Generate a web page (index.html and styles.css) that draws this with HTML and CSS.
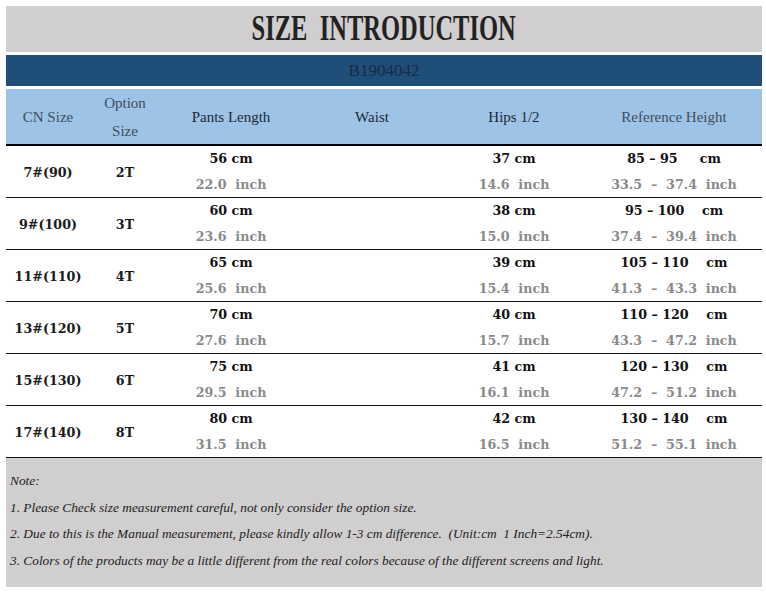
FILE: index.html
```html
<!DOCTYPE html>
<html>
<head>
<meta charset="utf-8">
<link rel="stylesheet" href="styles.css">
</head>
<body>
<div class="page">
  <div class="title"><span class="title-text">SIZE&nbsp;&nbsp;INTRODUCTION</span></div>
  <div class="band">B1904042</div>
  <div class="head">
    <div class="h light">CN Size</div>
    <div class="h light two"><span>Option</span><span>Size</span></div>
    <div class="h">Pants Length</div>
    <div class="h">Waist</div>
    <div class="h">Hips 1/2</div>
    <div class="h light">Reference Height</div>
  </div>

  <div class="row">
    <div class="c">7#(90)</div><div class="c">2T</div>
    <div class="c"><span class="cm">56 cm</span><span class="in">22.0  inch</span></div>
    <div class="c"></div>
    <div class="c"><span class="cm">37 cm</span><span class="in">14.6  inch</span></div>
    <div class="c"><span class="cm">85 – 95     cm</span><span class="in">33.5  –  37.4  inch</span></div>
  </div>
  <div class="row">
    <div class="c">9#(100)</div><div class="c">3T</div>
    <div class="c"><span class="cm">60 cm</span><span class="in">23.6  inch</span></div>
    <div class="c"></div>
    <div class="c"><span class="cm">38 cm</span><span class="in">15.0  inch</span></div>
    <div class="c"><span class="cm">95 – 100    cm</span><span class="in">37.4  –  39.4  inch</span></div>
  </div>
  <div class="row">
    <div class="c">11#(110)</div><div class="c">4T</div>
    <div class="c"><span class="cm">65 cm</span><span class="in">25.6  inch</span></div>
    <div class="c"></div>
    <div class="c"><span class="cm">39 cm</span><span class="in">15.4  inch</span></div>
    <div class="c"><span class="cm">105 – 110    cm</span><span class="in">41.3  –  43.3  inch</span></div>
  </div>
  <div class="row">
    <div class="c">13#(120)</div><div class="c">5T</div>
    <div class="c"><span class="cm">70 cm</span><span class="in">27.6  inch</span></div>
    <div class="c"></div>
    <div class="c"><span class="cm">40 cm</span><span class="in">15.7  inch</span></div>
    <div class="c"><span class="cm">110 – 120    cm</span><span class="in">43.3  –  47.2  inch</span></div>
  </div>
  <div class="row">
    <div class="c">15#(130)</div><div class="c">6T</div>
    <div class="c"><span class="cm">75 cm</span><span class="in">29.5  inch</span></div>
    <div class="c"></div>
    <div class="c"><span class="cm">41 cm</span><span class="in">16.1  inch</span></div>
    <div class="c"><span class="cm">120 – 130    cm</span><span class="in">47.2  –  51.2  inch</span></div>
  </div>
  <div class="row">
    <div class="c">17#(140)</div><div class="c">8T</div>
    <div class="c"><span class="cm">80 cm</span><span class="in">31.5  inch</span></div>
    <div class="c"></div>
    <div class="c"><span class="cm">42 cm</span><span class="in">16.5  inch</span></div>
    <div class="c"><span class="cm">130 – 140    cm</span><span class="in">51.2  –  55.1  inch</span></div>
  </div>

  <div class="note">
    <p>Note:</p>
    <p>1. Please Check size measurement careful, not only consider the option size.</p>
    <p>2. Due to this is the Manual measurement, please kindly allow 1-3 cm difference.&nbsp; (Unit:cm&nbsp; 1 Inch=2.54cm).</p>
    <p>3. Colors of the products may be a little different from the real colors because of the different screens and light.</p>
  </div>
</div>
</body>
</html>
```
FILE: styles.css
```css
html, body {
  margin: 0;
  padding: 0;
  background: #ffffff;
}
.page {
  padding: 6px 4px 0 6px;
  width: 756px;
  font-family: "Liberation Serif", "DejaVu Serif", serif;
}
.title {
  height: 46px;
  background: #d0cecf;
  display: flex;
  align-items: center;
  justify-content: center;
  margin-bottom: 3px;
}
.title-text {
  display: inline-block;
  font-family: "Liberation Serif", serif;
  font-weight: bold;
  font-size: 35px;
  line-height: 46px;
  color: #222222;
  transform: scaleX(0.70);
  white-space: nowrap;
}
.band {
  height: 31px;
  background: #1f4e78;
  color: #142c46;
  font-size: 17px;
  line-height: 31px;
  text-align: center;
  margin-bottom: 3px;
}
.head, .row {
  display: grid;
  grid-template-columns: 84px 70px 142px 140px 144px 176px;
}
.head {
  height: 55px;
  background: #9dc3e6;
  border-bottom: 2px solid #000000;
}
.h {
  display: flex;
  flex-direction: column;
  align-items: center;
  justify-content: center;
  font-size: 15px;
  color: #1c2936;
  padding-bottom: 1px;
}
.h.light {
  color: #3e4e5e;
}
.h.two {
  line-height: 28px;
}
.row {
  height: 51px;
  border-bottom: 1px solid #111111;
  font-family: "DejaVu Serif", serif;
  font-weight: bold;
  font-size: 12.7px;
}
.c {
  display: flex;
  flex-direction: column;
  align-items: center;
  justify-content: center;
  color: #1a1a1a;
  white-space: pre;
  padding-bottom: 1px;
}
.cm {
  display: block;
  line-height: 26px;
  color: #111111;
}
.in {
  display: block;
  line-height: 26px;
  color: #8a8a8a;
}
.note {
  height: 129px;
  background: #d0cecf;
  padding: 10px 0 0 4px;
  box-sizing: border-box;
  font-family: "Liberation Serif", serif;
  font-style: italic;
  font-size: 13.35px;
  color: #222222;
}
.note p {
  margin: 0;
  line-height: 26.6px;
}
```
